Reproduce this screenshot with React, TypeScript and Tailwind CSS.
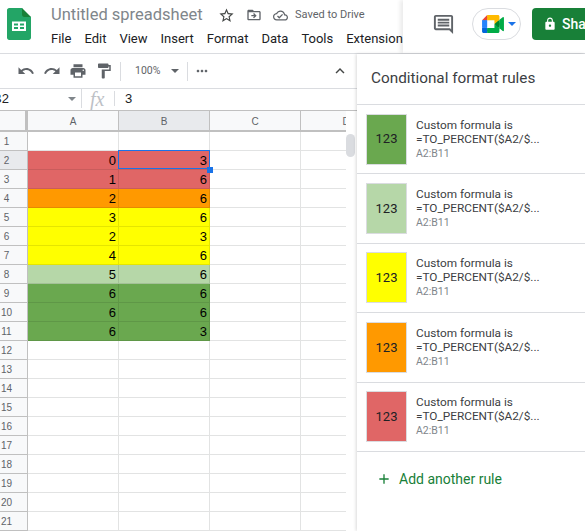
const roboto = '[font-family:Roboto,sans-serif]';

const paths = {
  star: 'M22 9.24l-7.19-.62L12 2 9.19 8.63 2 9.24l5.46 4.73L5.82 21 12 17.27 18.18 21l-1.63-7.03L22 9.24zM12 15.4l-3.76 2.27 1-4.28-3.32-2.88 4.38-.38L12 6.1l1.71 4.04 4.38.38-3.32 2.88 1 4.28L12 15.4z',
  move: 'M20 6h-8l-2-2H4c-1.1 0-2 .9-2 2v12c0 1.1.9 2 2 2h16c1.1 0 2-.9 2-2V8c0-1.1-.9-2-2-2zm0 12H4V8h16v10zM12 9l-1.4 1.4 1.6 1.6H8v2h4.2l-1.6 1.6L12 17l4-4z',
  cloud: 'M19.35 10.04C18.67 6.59 15.64 4 12 4 9.11 4 6.6 5.64 5.35 8.04 2.34 8.36 0 10.91 0 14c0 3.31 2.69 6 6 6h13c2.76 0 5-2.24 5-5 0-2.64-2.05-4.78-4.65-4.96zM19 18H6c-2.21 0-4-1.79-4-4 0-2.05 1.53-3.76 3.56-3.97l1.07-.11.5-.95C8.08 7.14 9.94 6 12 6c2.62 0 4.88 1.86 5.39 4.43l.3 1.5 1.53.11c1.56.1 2.78 1.41 2.78 2.96 0 1.65-1.35 3-3 3zm-9-3.82l-2.09-2.09L6.5 13.5 10 17l6.01-6.01-1.41-1.41z',
  comment: 'M21.99 4c0-1.1-.89-2-1.99-2H4c-1.1 0-2 .9-2 2v12c0 1.1.9 2 2 2h14l4 4-.01-18zM20 4v13.17L18.83 16H4V4h16zM6 12h12v2H6zm0-3h12v2H6zm0-3h12v2H6z',
  lock: 'M18 8h-1V6c0-2.76-2.24-5-5-5S7 3.24 7 6v2H6c-1.1 0-2 .9-2 2v10c0 1.1.9 2 2 2h12c1.1 0 2-.9 2-2V10c0-1.1-.9-2-2-2zm-6 9c-1.1 0-2-.9-2-2s.9-2 2-2 2 .9 2 2-.9 2-2 2zm3.1-9H8.9V6c0-1.71 1.39-3.1 3.1-3.1 1.71 0 3.1 1.39 3.1 3.1v2z',
  undo: 'M12.5 8c-2.65 0-5.05.99-6.9 2.6L2 7v9h9l-3.62-3.62c1.39-1.16 3.16-1.88 5.12-1.88 3.54 0 6.55 2.31 7.6 5.5l2.37-.78C21.08 11.03 17.15 8 12.5 8z',
  redo: 'M18.4 10.6C16.55 8.99 14.15 8 11.5 8c-4.65 0-8.58 3.03-9.96 7.22L3.9 16c1.05-3.19 4.05-5.5 7.6-5.5 1.95 0 3.73.72 5.12 1.88L13 16h9V7l-3.6 3.6z',
  print: 'M19 8H5c-1.66 0-3 1.34-3 3v6h4v4h12v-4h4v-6c0-1.66-1.34-3-3-3zm-3 11H8v-5h8v5zm3-7c-.55 0-1-.45-1-1s.45-1 1-1 1 .45 1 1-.45 1-1 1zm-1-9H6v4h12V3z',
  paint: 'M18 4V3c0-.55-.45-1-1-1H5c-.55 0-1 .45-1 1v4c0 .55.45 1 1 1h12c.55 0 1-.45 1-1V6h1v4H9v11c0 .55.45 1 1 1h2c.55 0 1-.45 1-1v-9h8V4h-3z',
  more: 'M6 10c-1.1 0-2 .9-2 2s.9 2 2 2 2-.9 2-2-.9-2-2-2zm12 0c-1.1 0-2 .9-2 2s.9 2 2 2 2-.9 2-2-.9-2-2-2zm-6 0c-1.1 0-2 .9-2 2s.9 2 2 2 2-.9 2-2-.9-2-2-2z',
  up: 'M7.41 15.41 12 10.83l4.59 4.58L18 14l-6-6-6 6z',
  plus: 'M19 13h-6v6h-2v-6H5v-2h6V5h2v6h6z',
};

function Icon({ d, className }: { d: string; className: string }) {
  return (
    <svg viewBox="0 0 24 24" fill="currentColor" className={className}>
      <path d={d} />
    </svg>
  );
}

function Caret({ className }: { className: string }) {
  return <div className={`h-0 w-0 border-x-[4px] border-t-[4px] border-x-transparent ${className}`} />;
}

function SheetsLogo() {
  return (
    <svg viewBox="0 0 24 32" className="mt-2 ml-[7px] h-8 w-6 shrink-0">
      <path d="M15 0H2.2C1 0 0 1 0 2.2v27.6C0 31 1 32 2.2 32h19.6c1.2 0 2.2-1 2.2-2.2V9l-6-3z" fill="#23a566" />
      <path d="M15 0v6.8c0 1.2 1 2.2 2.2 2.2H24z" fill="#188038" />
      <path d="M5 13.5h14v9.5H5zm2 2v2h4v-2zm6 0v2h4v-2zm-6 3.5v2h4v-2zm6 0v2h4v-2z" fill="#fff" fillRule="evenodd" />
    </svg>
  );
}

function MeetLogo() {
  return (
    <svg viewBox="0 0 87.5 72" className="h-[18px] w-[22px]">
      <path fill="#00832d" d="M49.5 36l8.53 9.75 11.47 7.33 2-17.02-2-16.64-11.69 6.44z" />
      <path fill="#0066da" d="M0 51.5V66c0 3.315 2.685 6 6 6h14.5l3-10.96-3-9.54-9.95-3z" />
      <path fill="#e94235" d="M20.5 0L0 20.5l10.55 3 9.95-3 2.95-9.41z" />
      <path fill="#2684fc" d="M20.5 20.5H0v31h20.5z" />
      <path fill="#00ac47" d="M82.6 8.68L69.5 19.42v33.66l13.16 10.79c1.97 1.54 4.85.135 4.85-2.37V11c0-2.535-2.945-3.925-4.91-2.32zM49.5 36v15.5h-29V72h43c3.315 0 6-2.685 6-6V53.08z" />
      <path fill="#ffba00" d="M63.5 0h-43v20.5h29V36l20-16.57V6c0-3.315-2.685-6-6-6z" />
    </svg>
  );
}

function Header() {
  const menus = ['File', 'Edit', 'View', 'Insert', 'Format', 'Data', 'Tools', 'Extensions'];
  return (
    <div className="flex h-[53px] shrink-0">
      <div className="flex w-[403px] shrink-0 overflow-hidden">
        <SheetsLogo />
        <div className="ml-5 min-w-0">
          <div className="mt-[4px] flex h-[22px] items-center">
            <span className="w-[151px] text-[16.5px] leading-[22px] whitespace-nowrap text-[#80868b]">Untitled spreadsheet</span>
            <Icon d={paths.star} className="ml-[16px] h-[17px] w-[17px] text-[#444746]" />
            <Icon d={paths.move} className="ml-[11px] h-[16px] w-[16px] text-[#5f6368]" />
            <Icon d={paths.cloud} className="ml-[11px] h-[15px] w-[15px] text-[#5f6368]" />
            <span className="ml-[7px] text-[11px] whitespace-nowrap text-[#5f6368]">Saved to Drive</span>
          </div>
          <div className="mt-[4px] flex gap-[13px] text-[13px] leading-[18px] whitespace-nowrap text-[#202124]">
            {menus.map((m) => (
              <span key={m}>{m}</span>
            ))}
          </div>
        </div>
      </div>
      <div className="z-10 flex min-w-0 flex-1 items-start overflow-hidden bg-white shadow-[-3px_0_4px_rgba(0,0,0,0.08)]">
        <Icon d={paths.comment} className="mt-[13px] ml-[29px] h-[23px] w-[23px] shrink-0 text-[#5f6368]" />
        <div className="mt-2 ml-[17px] flex h-8 w-[49px] shrink-0 items-center rounded-full border border-[#dadce0] pl-[9px]">
          <MeetLogo />
          <Caret className="ml-1 border-t-[#1a73e8]" />
        </div>
        <div className="mt-2 ml-[11px] flex h-8 w-[80px] shrink-0 items-center rounded bg-[#188038] pl-[11px] text-white">
          <Icon d={paths.lock} className="h-[14px] w-[14px] shrink-0" />
          <span className="ml-[5px] text-sm font-medium">Share</span>
        </div>
      </div>
    </div>
  );
}

function Toolbar() {
  return (
    <div className="flex h-[35px] shrink-0 items-center border-b border-[#dadce0] pl-[17px] text-[#5f6368]">
      <div className="flex gap-2">
        <Icon d={paths.undo} className="h-[18px] w-[18px]" />
        <Icon d={paths.redo} className="h-[18px] w-[18px]" />
        <Icon d={paths.print} className="h-[18px] w-[18px]" />
        <Icon d={paths.paint} className="h-[18px] w-[18px]" />
      </div>
      <div className="ml-[7px] h-[19px] w-px bg-[#dadce0]" />
      <span className="ml-[14px] w-[26px] text-[10.5px] whitespace-nowrap text-[#5f6368]">100%</span>
      <Caret className="ml-[10px] border-t-[#5f6368]" />
      <div className="ml-[8px] h-[19px] w-px bg-[#dadce0]" />
      <Icon d={paths.more} className="ml-[6px] h-4 w-4" />
      <Icon d={paths.up} className="ml-[121px] h-[18px] w-[18px] text-[#444746]" />
    </div>
  );
}

function FormulaBar() {
  return (
    <div className="flex h-[22px] shrink-0 items-center border-b border-[#c0c0c0] pb-[2px] text-[13px] text-[#202124] [font-family:'Liberation_Sans',sans-serif]">
      <span className="ml-[-7px] w-[75px]">B2</span>
      <Caret className="border-t-[#80868b]" />
      <div className="ml-[5px] h-[19px] w-px bg-[#dadce0]" />
      <span className="ml-[8px] w-[24px] text-[20px] leading-[20px] text-[#bdc1c6] italic [font-family:'Liberation_Serif',serif]">fx</span>
      <div className="h-[15px] w-px bg-[#dadce0]" />
      <span className="ml-[10px]">3</span>
    </div>
  );
}

const colors = {
  red: 'bg-[#e06666] border-[#c95c5c]',
  orange: 'bg-[#ff9900] border-[#e58a00]',
  yellow: 'bg-[#ffff00] border-[#e5e500]',
  light: 'bg-[#b6d7a8] border-[#a3c197]',
  green: 'bg-[#6aa84f] border-[#5f9747]',
  none: 'bg-white border-[#e2e3e3]',
};

const rows: { a: number; b: number; color: keyof typeof colors }[] = [
  { a: 0, b: 3, color: 'red' },
  { a: 1, b: 6, color: 'red' },
  { a: 2, b: 6, color: 'orange' },
  { a: 3, b: 6, color: 'yellow' },
  { a: 2, b: 3, color: 'yellow' },
  { a: 4, b: 6, color: 'yellow' },
  { a: 5, b: 6, color: 'light' },
  { a: 6, b: 6, color: 'green' },
  { a: 6, b: 6, color: 'green' },
  { a: 6, b: 3, color: 'green' },
];

function Cell({ value, color }: { value?: number; color: keyof typeof colors }) {
  return (
    <div className={`h-[19px] w-[91px] shrink-0 border-r border-b pr-[2px] text-right text-[13px] leading-[20px] text-black ${colors[color]}`}>
      {value}
    </div>
  );
}

function Row({ n }: { n: number }) {
  const data = rows[n - 2];
  const active = n === 2;
  return (
    <div className="flex h-[19px]">
      <div className={`h-[19px] w-[28px] shrink-0 border-r-[1px] border-b border-r-[#c0c0c0] border-b-[#c0c0c0] pr-[14px] text-center text-[10px] leading-[20px] text-[#5f6368] ${active ? 'bg-[#e8eaed]' : 'bg-[#f8f9fa]'}`}>
        {n}
      </div>
      <Cell value={data?.a} color={data ? data.color : 'none'} />
      <Cell value={data?.b} color={data ? data.color : 'none'} />
      <Cell color="none" />
      <Cell color="none" />
    </div>
  );
}

function Sheet() {
  const heads = ['A', 'B', 'C', 'D'];
  return (
    <div className="relative flex min-h-0 flex-1">
      <div className="w-[346px] shrink-0 overflow-hidden [font-family:'Liberation_Sans',sans-serif]">
        <div className="flex h-[21px]">
          <div className="h-[21px] w-[28px] shrink-0 border-r-[3px] border-b-[2px] border-[#c0c0c0] bg-[#f8f9fa]" />
          {heads.map((h) => (
            <div
              key={h}
              className={`h-[21px] w-[91px] shrink-0 border-r border-b-[2px] border-[#c0c0c0] text-center text-[10px] leading-[21px] text-[#5f6368] ${h === 'B' ? 'bg-[#e8eaed]' : 'bg-[#f8f9fa]'}`}
            >
              {h}
            </div>
          ))}
        </div>
        {Array.from({ length: 21 }, (_, i) => (
          <Row key={i} n={i + 1} />
        ))}
      </div>
      <div className="w-[11px] shrink-0 bg-white pt-[23px]">
        <div className="h-[23px] w-[9px] rounded-full bg-[#dadce0]" />
      </div>
      {/* selection over cell B2 */}
      <div className="absolute top-[39px] left-[118px] h-[19px] w-[92px] border border-[#1a73e8]" />
      <div className="absolute top-[56px] left-[207px] h-[6px] w-[6px] bg-[#1a73e8]" />
    </div>
  );
}

const swatches = ['bg-[#6aa84f]', 'bg-[#b6d7a8]', 'bg-[#ffff00]', 'bg-[#ff9900]', 'bg-[#e06666]'];

function Rule({ color }: { color: string }) {
  return (
    <div className="flex h-[69.4px] items-center border-b border-[#dadce0] pl-[9px]">
      <div className={`flex h-[51px] w-[41px] shrink-0 items-center justify-center border border-[#dadce0] text-[13px] text-[#202124] ${color}`}>123</div>
      <div className="ml-[9px] min-w-0 text-[11.8px] leading-[14px] whitespace-nowrap text-[#3c4043]">
        <div>Custom formula is</div>
        <div>=TO_PERCENT($A2/$...</div>
        <div className="mt-[1px] text-[10.5px] leading-[14px] text-[#80868b]">A2:B11</div>
      </div>
    </div>
  );
}

function Panel() {
  return (
    <div className="z-10 min-w-0 flex-1 bg-white shadow-[-1px_0_3px_rgba(0,0,0,0.15)]">
      <div className="flex h-[51px] items-center border-b border-[#dadce0] pb-[2px] pl-[14px] text-[15.3px] whitespace-nowrap text-[#3c4043]">Conditional format rules</div>
      {swatches.map((c) => (
        <Rule key={c} color={c} />
      ))}
      <div className="mt-[17px] flex items-center pl-[19px] text-[14px] whitespace-nowrap text-[#188038]">
        <Icon d={paths.plus} className="h-[16px] w-[16px]" />
        <span className="ml-[7px]">Add another rule</span>
      </div>
    </div>
  );
}

export default function App() {
  return (
    <div className={`flex h-[531px] w-[585px] flex-col overflow-hidden bg-white ${roboto}`}>
      <Header />
      <div className="flex min-h-0 flex-1 border-t border-[#dadce0]">
        <div className="flex w-[357px] shrink-0 flex-col overflow-hidden">
          <Toolbar />
          <FormulaBar />
          <Sheet />
        </div>
        <Panel />
      </div>
    </div>
  );
}
